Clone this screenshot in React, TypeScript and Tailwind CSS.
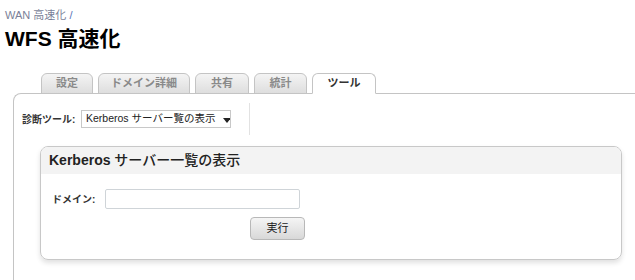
const JP = "font-['Liberation_Sans','Noto_Sans_CJK_JP',sans-serif]";

const tabs = [
  { label: "設定", w: "w-[52px]" },
  { label: "ドメイン詳細", w: "w-[92px]" },
  { label: "共有", w: "w-[54px]" },
  { label: "統計", w: "w-[53px]" },
  { label: "ツール", w: "w-[64px]", active: true },
];

export default function App() {
  return (
    <div className={`${JP} w-[635px] h-[280px] overflow-hidden bg-white`}>
      {/* breadcrumb + title */}
      <div className="pl-[5px] pt-[8px] text-[11px] leading-[14px] text-[#7a7f98]">
        WAN 高速化 <span className="text-[#5b74b8]">/</span>
      </div>
      <h1 className="pl-[5px] mt-[5px] text-[21px] leading-[24px] font-bold text-black">WFS 高速化</h1>

      {/* tabs */}
      <div className="mt-[22px] pl-[41px] flex gap-[5px] items-end relative z-10">
        {tabs.map((t) => (
          <div
            key={t.label}
            className={`${t.w} h-[21px] -mb-[1px] flex items-center justify-center rounded-t-[6px] border border-[#c4c4c4] text-[11px] font-bold ${
              t.active
                ? "bg-white border-b-white text-[#333]"
                : "bg-gradient-to-b from-[#f4f4f4] to-[#dedede] text-[#8a8a8a]"
            }`}
          >
            {t.label}
          </div>
        ))}
      </div>

      {/* panel */}
      <div className="ml-[13px] border-t border-l border-[#c4c4c4] rounded-tl-[8px] h-[200px] pt-[16px]">
        <div className="flex items-center pl-[8px] h-[18px]">
          <span className="text-[10px] font-bold text-[#333] w-[59px] whitespace-nowrap">診断ツール:</span>
          <div className="w-[150px] h-[18px] border border-[#c8c8c8] flex items-center gap-[8px] pl-[4px] text-[10.5px] text-[#222] whitespace-nowrap overflow-hidden">
            <span>Kerberos サーバー覧の表示</span>
            <svg width="8" height="5" viewBox="0 0 8 5" className="mt-[3px] shrink-0">
              <path d="M0 0h8L4 5z" fill="#222" />
            </svg>
          </div>
          <div className="ml-[18px] w-px h-[32px] -my-[7px] bg-[#e2e2e2]" />
        </div>

        {/* card */}
        <div className="ml-[26px] mr-[13px] mt-[18px] border border-[#c8c8c8] rounded-[8px] shadow-[0_3px_5px_rgba(0,0,0,0.12)] overflow-hidden">
          <div className="bg-[#f3f3f3] h-[27px] flex items-center pl-[8px] text-[14px] text-[#222]">
            <span className="font-bold">Kerberos</span>&nbsp;<span className="font-medium">サーバー一覧の表示</span>
          </div>
          <div className="pt-[15px] pb-[19px]">
            <div className="flex items-center pl-[11px]">
              <span className="w-[53px] text-[10px] font-bold text-[#333]">ドメイン:</span>
              <div className="w-[195px] h-[20px] border border-[#cfd4d8] rounded-[2px]" />
            </div>
            <div className="flex pl-[209px] mt-[8px]">
              <button className="w-[55px] h-[23px] rounded-[4px] border border-[#b8b8b8] bg-gradient-to-b from-[#f5f5f5] to-[#d8d8d8] text-[11px] text-[#222]">
                実行
              </button>
            </div>
          </div>
        </div>
      </div>
    </div>
  );
}
